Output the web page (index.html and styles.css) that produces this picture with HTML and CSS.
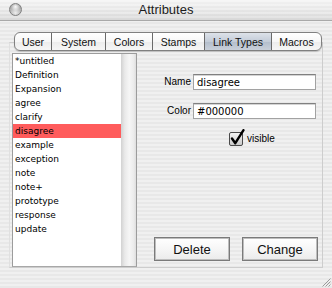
FILE: index.html
```html
<!DOCTYPE html>
<html>
<head>
<meta charset="utf-8">
<link rel="stylesheet" href="styles.css">
</head>
<body>
<div class="window">
  <header class="titlebar">
    <span class="close"></span>
    <h1 class="title">Attributes</h1>
    <span></span>
  </header>
  <main class="content">
    <nav class="tabs">
      <span class="tab tab-user">User</span>
      <span class="tab tab-system">System</span>
      <span class="tab tab-colors">Colors</span>
      <span class="tab tab-stamps">Stamps</span>
      <span class="tab tab-link active">Link Types</span>
      <span class="tab tab-macros">Macros</span>
    </nav>
    <section class="panel">
      <div class="list">
        <ul class="items">
          <li>*untitled</li>
          <li>Definition</li>
          <li>Expansion</li>
          <li>agree</li>
          <li>clarify</li>
          <li class="selected">disagree</li>
          <li>example</li>
          <li>exception</li>
          <li>note</li>
          <li>note+</li>
          <li>prototype</li>
          <li>response</li>
          <li>update</li>
        </ul>
        <div class="track"></div>
      </div>
      <div class="form">
        <div class="field"><span class="label">Name</span><span class="input">disagree</span></div>
        <div class="field field-color"><span class="label">Color</span><span class="input">#000000</span></div>
        <div class="check">
          <svg class="checkbox" width="17" height="18" viewBox="0 0 17 18">
            <defs>
              <linearGradient id="cb" x1="0" y1="0" x2="0" y2="1">
                <stop offset="0" stop-color="#f4f4f4"/>
                <stop offset="1" stop-color="#c9c9c9"/>
              </linearGradient>
            </defs>
            <rect x="0.5" y="3.5" width="13" height="13" rx="1.5" fill="url(#cb)" stroke="#4a4a4a"/>
            <path d="M3 9.5 L6.3 14.2 L14.5 1.2" fill="none" stroke="#000" stroke-width="2.4" stroke-linecap="round" stroke-linejoin="round"/>
          </svg>
          <span class="check-label">visible</span>
        </div>
        <div class="buttons">
          <span class="button">Delete</span>
          <span class="button">Change</span>
        </div>
      </div>
    </section>
  </main>
  <svg class="grip" width="10" height="10" viewBox="0 0 10 10">
    <path d="M9.5 1.5 L1.5 9.5 M9.5 4.5 L4.5 9.5 M9.5 7.5 L7.5 9.5" stroke="#9a9a9a" stroke-width="1"/>
  </svg>
</div>
</body>
</html>
```

FILE: styles.css
```css
html, body {
  margin: 0;
  padding: 0;
}

body {
  width: 332px;
  height: 288px;
  overflow: hidden;
  font-family: "Liberation Sans", Arial, sans-serif;
  color: #000;
  background: repeating-linear-gradient(to bottom, #f0f0f0 0, #f0f0f0 2px, #e8e8e8 2px, #e8e8e8 4px);
}

.window {
  position: relative;
  width: 332px;
  height: 288px;
  display: flex;
  flex-direction: column;
}

/* Title bar */
.titlebar {
  height: 21px;
  box-sizing: border-box;
  display: grid;
  grid-template-columns: 1fr auto 1fr;
  align-items: center;
  border-bottom: 1px solid #a9a9a9;
  background:
    linear-gradient(to bottom, rgba(255,255,255,0.55), rgba(255,255,255,0) 60%, rgba(0,0,0,0.05)),
    repeating-linear-gradient(to bottom, #ececec 0, #ececec 2px, #e3e3e3 2px, #e3e3e3 4px);
}

.close {
  width: 13px;
  height: 13px;
  margin: -1px 0 0 9px;
  border-radius: 50%;
  box-sizing: border-box;
  border: 1px solid #808080;
  background:
    radial-gradient(circle at 50% 25%, rgba(255,255,255,0.95) 0, rgba(255,255,255,0.2) 35%, rgba(255,255,255,0) 45%),
    radial-gradient(circle at 50% 80%, #eeeeee 0, #bdbdbd 45%, #969696 100%);
}

.title {
  margin: 0;
  font-size: 13px;
  font-weight: normal;
  color: #1c1c1c;
  line-height: 20px;
}

/* Content */
.content {
  display: flex;
  flex-direction: column;
  padding: 11px 0 0 9px;
}

.tabs {
  position: relative;
  z-index: 1;
  display: flex;
  width: 308px;
  height: 19px;
  margin-left: 5px;
  box-sizing: border-box;
  border: 1px solid #808080;
  border-radius: 6px;
  overflow: hidden;
  background: linear-gradient(to bottom, #ffffff 0, #f7f7f7 50%, #ececec 51%, #f6f6f6 100%);
  box-shadow: 0 1px 1px rgba(0,0,0,0.18);
}

.tab {
  display: flex;
  align-items: center;
  justify-content: center;
  font-size: 10.5px;
  color: #111;
  box-sizing: border-box;
  border-left: 1px solid #6a6a6a;
  padding-top: 1px;
}

.tab-user { width: 36px; border-left: none; }
.tab-system { width: 54px; }
.tab-colors { width: 47px; }
.tab-stamps { width: 52px; }
.tab-link { width: 68px; }
.tab-macros { width: 49px; }

.tab.active {
  background: linear-gradient(to bottom, #dde2e9 0, #c3ccd8 50%, #b2bdcb 51%, #c9d0da 100%);
  border-right: 1px solid #6a6a6a;
}

.tab.active + .tab {
  border-left: none;
}

.panel {
  display: flex;
  width: 314px;
  height: 226px;
  margin-top: -9px;
  box-sizing: border-box;
  padding: 10px 0 0 2px;
  border: 1px solid #cdcdcd;
  border-left-color: #e0e0e0;
}

/* List */
.list {
  display: flex;
  width: 125px;
  align-self: stretch;
  box-sizing: border-box;
  border: 1px solid #9c9c9c;
  border-bottom-color: #a8a8a8;
  background: #fff;
}

.items {
  list-style: none;
  margin: 0;
  padding: 0;
  width: 108px;
  font-family: "DejaVu Sans", Verdana, sans-serif;
  font-size: 9px;
}

.items li {
  height: 14px;
  line-height: 14px;
  padding-left: 2px;
  white-space: nowrap;
}

.items li.selected {
  background: #ff5c5c;
}

.track {
  flex: 1;
  background: linear-gradient(to right, #d2d2d2 0, #e9e9e9 25%, #f6f6f6 55%, #ececec 85%, #dedede 100%);
}

/* Form */
.form {
  flex: 1;
  display: flex;
  flex-direction: column;
  padding: 21px 6px 6px 0;
}

.field {
  display: flex;
  justify-content: flex-end;
  align-items: center;
  height: 16px;
}

.field-color {
  margin-top: 13px;
}

.label {
  font-size: 10px;
  margin-right: 2px;
  margin-top: -2px;
}

.input {
  width: 123px;
  height: 16px;
  box-sizing: border-box;
  padding: 0 0 0 3px;
  border: 1px solid #a2a2a2;
  border-top-color: #808080;
  box-shadow: inset 0 1px 0 #d4d4d4;
  background: #fff;
  font-family: "DejaVu Sans", Verdana, sans-serif;
  font-size: 10px;
  line-height: 15px;
}

.check {
  display: flex;
  align-items: flex-end;
  margin: 10px 0 0 92px;
  height: 18px;
}

.checkbox {
  display: block;
}

.check-label {
  font-size: 10px;
  margin-left: 1px;
  line-height: 13px;
  padding-bottom: 2px;
}

.buttons {
  margin-top: auto;
  margin-right: -2px;
  display: flex;
  justify-content: flex-end;
  gap: 12px;
}

.button {
  width: 76px;
  height: 24px;
  box-sizing: border-box;
  display: flex;
  align-items: center;
  justify-content: center;
  font-size: 13px;
  color: #111;
  border: 1px solid #7a7a7a;
  box-shadow: inset 0 0 0 1px #bdbdbd;
  background: linear-gradient(to bottom, #ffffff 0, #f6f6f6 50%, #ebebeb 100%);
}

/* Resize grip overlays window corner */
.grip {
  position: absolute;
  right: 1px;
  bottom: 1px;
}
```
